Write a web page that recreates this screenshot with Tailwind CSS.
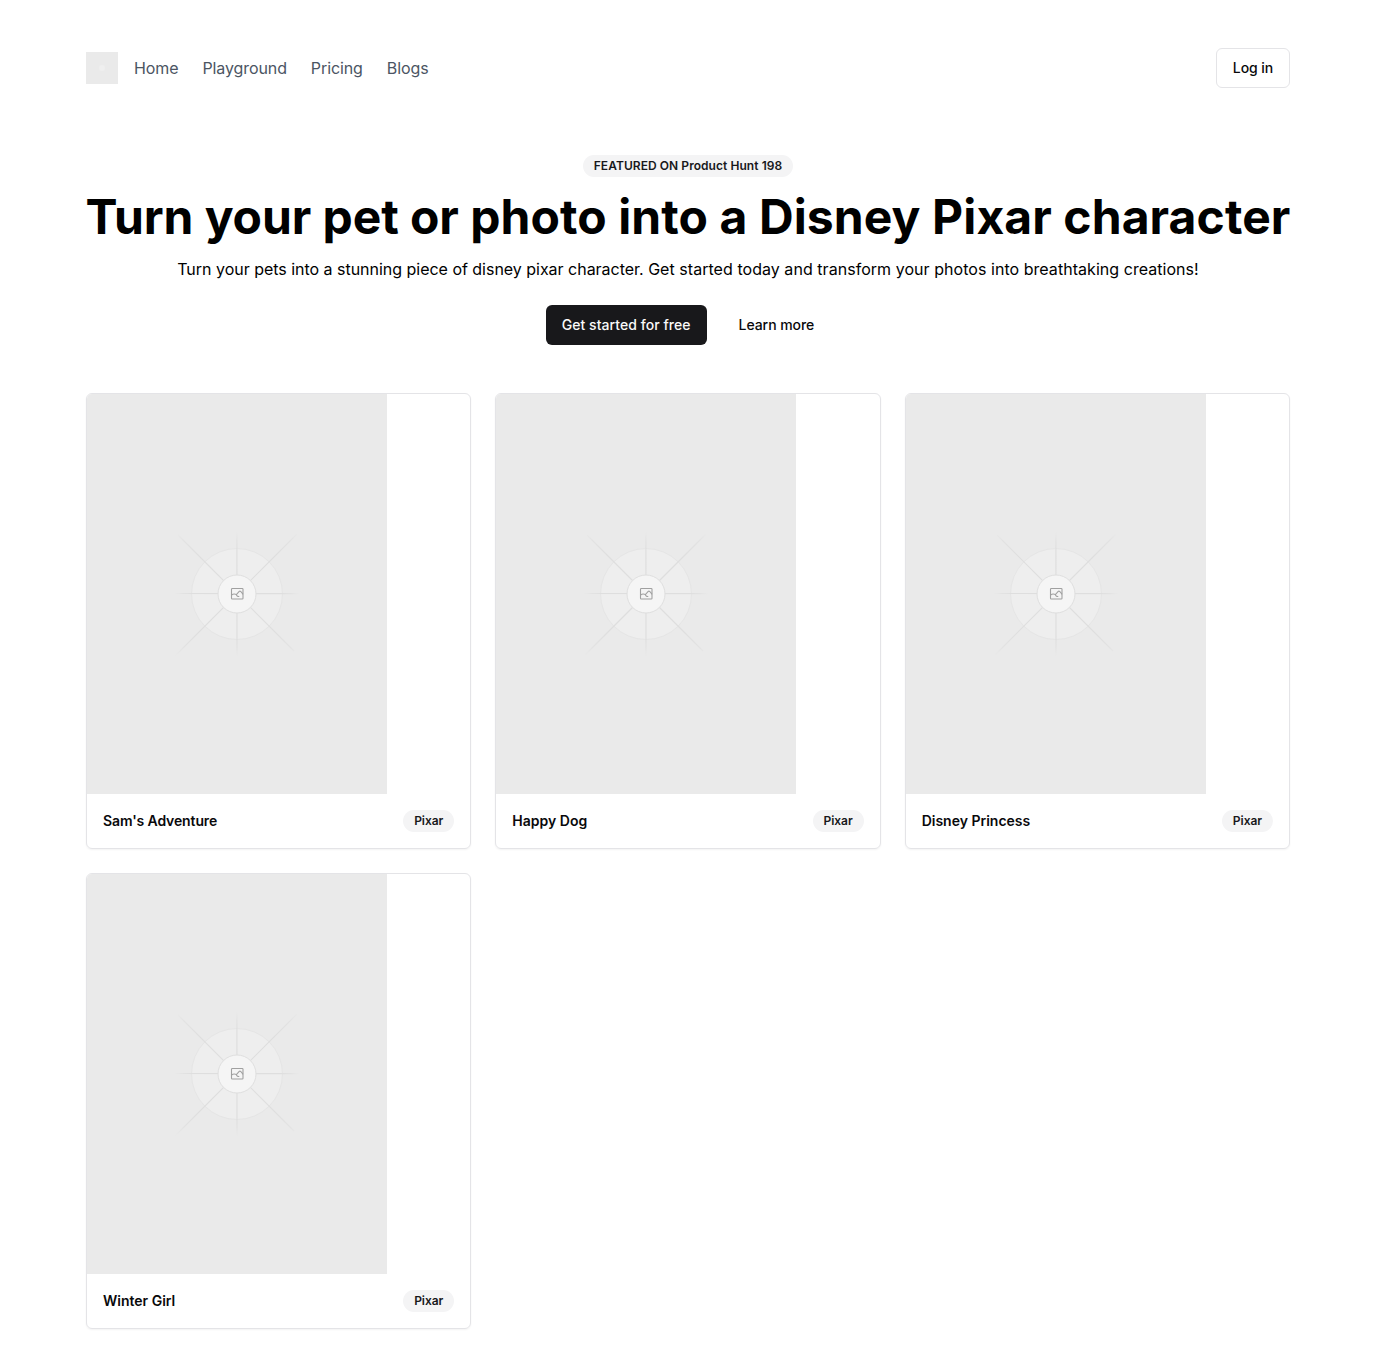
<!DOCTYPE html>
<html lang="en">
<head>
<meta charset="utf-8">
<title>Pixar characters</title>
<script src="https://cdn.jsdelivr.net/npm/@tailwindcss/browser@4"></script>
</head>
<body class="bg-white font-['Inter',sans-serif] text-[#09090b]">
<svg class="absolute size-0" aria-hidden="true">
  <defs>
    <radialGradient id="fade" gradientUnits="userSpaceOnUse" cx="150" cy="200" r="88">
      <stop offset="0.6" stop-color="#dedede"/>
      <stop offset="0.85" stop-color="#dfdfdf" stop-opacity="0.7"/>
      <stop offset="1" stop-color="#e2e2e2" stop-opacity="0"/>
    </radialGradient>
    <radialGradient id="fade-axis" gradientUnits="userSpaceOnUse" cx="150" cy="200" r="63">
      <stop offset="0.7" stop-color="#dedede"/>
      <stop offset="0.85" stop-color="#dfdfdf" stop-opacity="0.7"/>
      <stop offset="1" stop-color="#e2e2e2" stop-opacity="0"/>
    </radialGradient>
    <symbol id="placeholder" viewBox="0 0 300 400">
      <rect width="300" height="400" fill="#eaeaea"/>
      <circle cx="150" cy="200" r="45.5" fill="#eeeeee" stroke="#e5e5e5"/>
      <g fill="none" stroke-width="1.2">
        <path stroke="url(#fade-axis)" d="M88 199.5L212 199.6M149.9 138L150 262"/>
        <path stroke="url(#fade)" d="M91 141L207 257M210 140L88 262"/>
      </g>
      <circle cx="150" cy="200" r="19" fill="#f5f5f5" stroke="#dfdfdf"/>
      <g fill="none" stroke="#a0a0a0" stroke-width="1.1">
        <rect x="144.5" y="194.5" width="11.5" height="10.5" rx="0.8"/>
        <path d="M144.5 201.2C146.2 199.6 147.8 199.8 149.4 200.6L152.2 197.4C153.2 196.7 154.3 197.6 156 200.4M149.4 200.6C149.8 202.4 151.2 202.9 152.2 202.2"/>
      </g>
    </symbol>
  </defs>
</svg>
<div class="mx-auto w-[1204px] pt-12">
  <header class="flex h-10 items-center justify-between">
    <div class="flex items-center gap-4">
      <div class="flex size-8 items-center justify-center bg-[#eaeaea]"><div class="size-1.5 rounded-full bg-[#efefef]"></div></div>
      <nav class="flex gap-6 text-base tracking-[-0.1px] text-[#4b5563]">
        <a>Home</a><a>Playground</a><a>Pricing</a><a>Blogs</a>
      </nav>
    </div>
    <a class="flex h-10 items-center rounded-md border border-[#e4e4e7] px-4 text-sm font-medium tracking-[-0.1px]">Log in</a>
  </header>
  <section class="flex flex-col items-center pt-[67px]">
    <div class="flex h-[22px] items-center rounded-full bg-[#f4f4f5] px-[11px] text-xs font-semibold tracking-[0.06px] text-[#18181b]">FEATURED ON Product Hunt 198</div>
    <h1 class="mt-4 whitespace-nowrap text-5xl leading-12 font-bold tracking-[0.045px] text-black"><span class="tracking-[-0.08px]">Turn your pet or </span><span class="tracking-[0.1px]">photo into a Disney Pixar character</span></h1>
    <p class="mt-4 text-base text-black"><span class="tracking-[-0.02px]">Turn your pets into a stunning piece of disney pixar character. </span><span class="tracking-[0.045px]">Get started today and transform your photos into breathtaking creations!</span></p>
    <div class="mt-6 flex">
      <a class="flex h-10 items-center rounded-md bg-[#18181b] px-4 text-sm font-medium tracking-[0.05px] text-[#fafafa]">Get started for free</a>
      <a class="ml-4 flex h-10 items-center px-4 text-sm font-medium tracking-[-0.05px]">Learn more</a>
    </div>
  </section>
  <main class="mt-12 grid grid-cols-3 gap-6 pb-8">
    <article class="h-[456px] overflow-hidden rounded-md border border-[#e4e4e7] shadow-xs">
      <svg class="block h-[400px] w-[300px]"><use href="#placeholder"/></svg>
      <div class="flex items-center justify-between p-4"><h2 class="text-sm leading-[22px] font-semibold tracking-[-0.12px]">Sam's Adventure</h2><span class="flex h-[22px] items-center rounded-full bg-[#f4f4f5] px-[11px] text-xs font-semibold tracking-[-0.04px] text-[#18181b]">Pixar</span></div>
    </article>
    <article class="h-[456px] overflow-hidden rounded-md border border-[#e4e4e7] shadow-xs">
      <svg class="block h-[400px] w-[300px]"><use href="#placeholder"/></svg>
      <div class="flex items-center justify-between p-4"><h2 class="text-sm leading-[22px] font-semibold">Happy Dog</h2><span class="flex h-[22px] items-center rounded-full bg-[#f4f4f5] px-[11px] text-xs font-semibold tracking-[-0.04px] text-[#18181b]">Pixar</span></div>
    </article>
    <article class="h-[456px] overflow-hidden rounded-md border border-[#e4e4e7] shadow-xs">
      <svg class="block h-[400px] w-[300px]"><use href="#placeholder"/></svg>
      <div class="flex items-center justify-between p-4"><h2 class="text-sm leading-[22px] font-semibold">Disney Princess</h2><span class="flex h-[22px] items-center rounded-full bg-[#f4f4f5] px-[11px] text-xs font-semibold tracking-[-0.04px] text-[#18181b]">Pixar</span></div>
    </article>
    <article class="h-[456px] overflow-hidden rounded-md border border-[#e4e4e7] shadow-xs">
      <svg class="block h-[400px] w-[300px]"><use href="#placeholder"/></svg>
      <div class="flex items-center justify-between p-4"><h2 class="text-sm leading-[22px] font-semibold">Winter Girl</h2><span class="flex h-[22px] items-center rounded-full bg-[#f4f4f5] px-[11px] text-xs font-semibold tracking-[-0.04px] text-[#18181b]">Pixar</span></div>
    </article>
  </main>
</div>
</body>
</html>
